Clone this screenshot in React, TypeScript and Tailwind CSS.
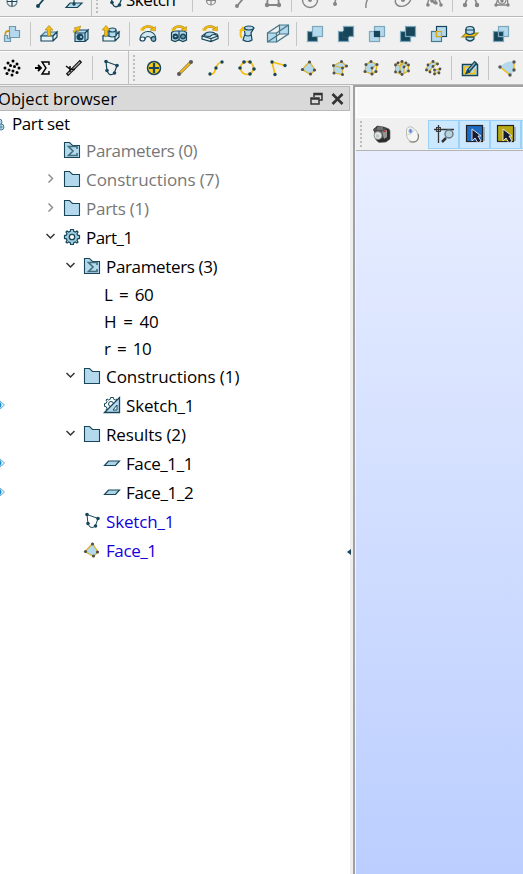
import type { ReactNode } from "react";

const D = "#17465a";
const B = "#b5d9ec";
const Y = "#f5bd10";
const M = "#dcb42a";
const G = "#858585";

function Dots({ pts, c = D, r = 1.7 }: { pts: number[][]; c?: string; r?: number }) {
  return (
    <>
      {pts.map(([x, y], i) => (
        <circle key={i} cx={x} cy={y} r={r} fill={c} stroke="none" />
      ))}
    </>
  );
}

function Tool({ children, label }: { children?: ReactNode; label: string }) {
  return (
    <button aria-label={label} className="h-8 w-[31px] shrink-0">
      <svg width="31" height="32" viewBox="-16 -16 31 32" fill="none" stroke={D} strokeWidth="1.2" className="block overflow-visible">
        {children}
      </svg>
    </button>
  );
}

function Sep() {
  return (
    <div className="flex h-6 w-1.5 shrink-0 justify-center">
      <div className="w-px bg-[#c6c6c6]" />
    </div>
  );
}

function Handle() {
  return (
    <div className="-mr-[2px] ml-[2px] flex h-[34px] w-3 shrink-0 items-center border-l border-[#c0c0c0] pl-[4px]">
      <Grip />
    </div>
  );
}

function Grip() {
  return (
    <div className="flex flex-col gap-[2px]">
      {[0, 1, 2, 3, 4, 5, 6].map((i) => (
        <div key={i} className="size-[2px] bg-[#bcbcbc]" />
      ))}
    </div>
  );
}

function SketchShape() {
  return (
    <>
      <path d="M-5-6.500L6-2.500L3.500 4.500Q1 8-2 6L-4 3Z" />
      <Dots pts={[[-5, -6.500], [6, -2.500], [3.500, 5], [-4, 2.500]]} r={1.800} />
    </>
  );
}

function Squares({ a, b, c, sa = "#7ba7bd", sb = "#7ba7bd", sc = D }: { a: string; b: string; c?: string; sa?: string; sb?: string; sc?: string }) {
  return (
    <>
      <rect x="-7.500" y="-2.500" width="10" height="10" fill={a} stroke={sa} />
      <rect x="-2.500" y="-7.500" width="10" height="10" fill={b} stroke={sb} />
      {c && <rect x="-2.500" y="-2.500" width="5" height="5" fill={c} stroke={sc} />}
    </>
  );
}

function FaceShape() {
  return (
    <>
      <path d="M.5-6.500L6 2L1.500 6.500L-7 1.500Z" fill={B} stroke={M} strokeWidth="1.300" />
      <Dots pts={[[0.5, -6], [5.5, 2], [1.500, 6], [-6.500, 1.500]]} c="#4f4f4f" r={1.600} />
    </>
  );
}

function TopRow() {
  return (
    <div className="-mt-[17px] flex h-[34px] items-center border-b border-[#b9b9b9] pt-px">
      <div className="-ml-1 flex items-center">
        <Tool label="Point"><circle cy="1.500" cx="0" r="5" stroke="#6b8592" /><path d="M-5 1.500H5M0-4V6.500" /></Tool>
        <Tool label="Line"><path d="M-5 6L5-6" strokeWidth="1.800" /><Dots pts={[[-5, 6], [5, -6]]} r={2} /></Tool>
        <Tool label="Plane"><path d="M-4 3H8L3.500 7.500H-8Z" fill={B} /><path d="M0-5V4" /><Dots pts={[[0, 4]]} /></Tool>
        <Handle />
        <button className="flex h-8 w-[88px] items-center">
          <svg width="26" height="32" viewBox="-15 -16 26 32" fill="none" stroke={D} strokeWidth="1.300"><SketchShape /></svg>
          <span className="-ml-px text-[17px] leading-8 tracking-[-0.500px] text-black">Sketch</span>
        </button>
        <Sep />
        <Tool label="Sketch point"><circle cy=".5" r="4.500" stroke={G} /><path d="M-4 .5H4M0-4V5" stroke={G} /></Tool>
        <Tool label="Sketch line"><path d="M-5 6L5-6" stroke={G} strokeWidth="1.800" /><Dots pts={[[-5, 6], [5, -6]]} c={G} r={2} /></Tool>
        <Tool label="Rectangle"><path d="M-6 5L-5-4H5L6 5Z" stroke={G} strokeWidth="1.800" /><Dots pts={[[-6, 5], [6, 5]]} c={G} r={2.200} /></Tool>
        <Sep />
        <Tool label="Circle"><circle r="7.500" stroke={G} strokeWidth="1.400" /><Dots pts={[[0, 0]]} c={G} r={2} /></Tool>
        <Tool label="Arc"><path d="M-6 4Q-6-3 0-6" stroke={G} strokeWidth="1.400" /><Dots pts={[[-6, 4]]} c={G} r={2} /></Tool>
        <Tool label="Fillet"><path d="M-6 8Q-7 0 0-6" stroke={G} strokeWidth="1.400" /></Tool>
        <Tool label="Ellipse"><ellipse rx="8" ry="6" transform="rotate(-25)" stroke={G} strokeWidth="1.400" /><Dots pts={[[0, 0]]} c={G} r={2} /></Tool>
        <Tool label="Spline"><path d="M-7 5L-4-4L0 3L4-4L7 5" stroke={G} strokeWidth="1.400" /><Dots pts={[[-6, 5], [-2, 1], [2, 3], [7, 5]]} c={G} r={1.800} /></Tool>
        <Sep />
        <Tool label="Curve poles"><path d="M-6 5Q-5-2 0-4Q5-2 6 5M-6 5L-2-6M6 5L2-6" stroke={G} strokeWidth="1.300" /><Dots pts={[[-6, 5], [6, 5]]} c={G} r={2.200} /></Tool>
        <Tool label="Periodic spline"><path d="M-6 5L-3-5L5-4L6 5Z" stroke={G} strokeWidth="1.300" /><circle r="4" stroke={G} /><Dots pts={[[-6, 5], [6, 5], [0, 1]]} c={G} /></Tool>
      </div>
    </div>
  );
}

function Box() {
  return (
    <>
      <path d="M-8 2L-4-2H8L4 2Z" fill={B} stroke="#46788b" />
      <path d="M-8 2H4V7H-8ZM4 2L8-2V3L4 7" fill="#e4f2f8" />
    </>
  );
}

function UpArrow({ x = 0 }: { x?: number }) {
  return <path d={`M${x} -8.5L${x + 4} -4H${x + 1.5}V2H${x - 1.5}V-4H${x - 4}Z`} fill={Y} stroke="#aa8926" strokeWidth=".7" />;
}

function TurnArrow() {
  return (
    <>
      <path d="M-5.500-4.500Q-4-7.500 0-7.500Q4-7.500 5.500-5" stroke="#a98318" strokeWidth="2.600" />
      <path d="M-5.500-4.500Q-4-7.500 0-7.500Q4-7.500 5.500-5" stroke={Y} strokeWidth="1.600" />
      <path d="M2-4L7.500-7.500V-3Z" fill={Y} stroke="#a98318" strokeWidth=".5" />
      <path d="M-7.500-6V-3L-3-3.500Z" fill={Y} stroke="none" />
    </>
  );
}

function FeatureRow() {
  return (
    <div className="flex h-[34px] items-center border-b border-[#b9b9b9] shadow-[inset_0_1px_#ffffff]">
      <div className="-ml-1 flex items-center">
        <Tool label="Placement">
          <path d="M-2.500-7.500H3.500V-3.500H7.500V3.500H-2.500Z" fill={B} stroke="#6c9aad" />
          <path d="M-7.500 1.500H-4.500V4.500H-1.500V7.500H-7.500Z" fill={B} stroke="#6c9aad" />
          <path d="M-6.500 1Q-7.500-3-3-3" stroke="#c69b24" strokeWidth="1.800" />
        </Tool>
        <Sep />
        <Tool label="Extrusion"><Box /><UpArrow /></Tool>
        <Tool label="Extrusion cut">
          <path d="M-5-2L-2-4H8L5-1H-5ZM-5-1H5V7.500H-5ZM5-1L8-4V5L5 7.500" fill={B} />
          <circle cy="3" r="3" fill={D} /><circle cx="1" cy="3" r="1" fill={B} stroke="none" />
          <path d="M-7-3L-4-5L-6-6L1-8L-2-2L-3-4L-6-1Z" fill={Y} stroke="#aa8926" strokeWidth=".6" />
        </Tool>
        <Tool label="Extrusion fuse"><Box /><path d="M-2-4V2Q1 4 5 2V-4" fill={B} /><ellipse cx="1.500" cy="-4" rx="3.500" ry="2" fill={B} /><UpArrow x={-5} /></Tool>
        <Sep />
        <Tool label="Revolution">
          <path d="M-5.500 4.500Q-4 0 0 0Q4 0 5.500 4" stroke={D} strokeWidth="6" /><path d="M-5.500 4.500Q-4 0 0 0Q4 0 5.500 4" stroke="#d3e8f1" strokeWidth="4.200" />
          <ellipse cx="-5.500" cy="5" rx="2.500" ry="2" fill="#fff" /><circle cx="5.500" cy="5" r="2.300" fill="#8bb6c9" /><TurnArrow />
        </Tool>
        <Tool label="Revolution cut">
          <path d="M-7.500-1.500L-5-3H5L7.500-1.500V6L4 7.500L0 6L-4 7.500L-7.500 6Z" fill={B} /><circle cx="-3.500" cy="2.500" r="2.400" fill={D} /><circle cx="4" cy="2.500" r="2.400" fill="#6893a4" /><path d="M0-3V6" /><path d="M-4.500 2.500H-2.500" stroke={B} /><TurnArrow />
        </Tool>
        <Tool label="Revolution fuse">
          <path d="M-8 2L-4-1L7 0L8 2V4.500L1 7.500L-8 5ZM-8 2L1 4.500L8 2M1 4.500V7" fill="#e5f2f6" /><path d="M-5.500 2Q-5-2 0-2Q5-2 6 1Q3-.5 0 2.500Z" fill={B} /><TurnArrow />
        </Tool>
        <Sep />
        <Tool label="Pipe">
          <path d="M-3-6Q2-9 7-6L4-1L5 6Q1 9-4 6L-2 0Z" fill={B} /><ellipse cx="2" cy="-6" rx="4.500" ry="2" fill={B} /><path d="M-2 1Q1 3 4 1" />
          <path d="M-5 4Q-8 1-5-5" stroke={Y} strokeWidth="2" /><path d="M-8-3L-4-8L-2-3Z" fill={Y} stroke="none" />
        </Tool>
        <Tool label="Loft">
          <path d="M-10.500-1H-1.500V8H-10.500ZM1.500-9H10.500V0H1.500Z" fill={B} stroke="#477787" /><path d="M-10.500-1L1.500-9M-1.500-1L10.500-9M-1.500 8L10.500 0M-10.500 8L1.500 0" stroke="#477787" strokeWidth="1.400" />
        </Tool>
        <Sep />
        <Tool label="Cut"><Squares a={D} b={B} /></Tool>
        <Tool label="Fuse"><Squares a={D} b={D} /><path d="M-2-2H2V2H-2Z" fill={D} strokeWidth="2" /></Tool>
        <Tool label="Common"><Squares a={B} b={B} c={D} /></Tool>
        <Tool label="Smash"><Squares a={D} b={D} /></Tool>
        <Tool label="Split"><Squares a={B} b={B} c={B} sa="#467b91" sb={D} sc="#dbab16" /></Tool>
        <Tool label="Partition"><path d="M-4-5V5Q0 9 4 5V-5" fill={B} /><ellipse cy="-5" rx="4" ry="2.500" fill={B} /><path d="M-4-1H8L4 3H-8Z" fill={Y} stroke="#a58b20" /><path d="M-4-1Q0 2 4-1V-4H-4Z" fill={B} /><path d="M-4 3H4" /></Tool>
        <Tool label="Fill"><Squares a={D} b={B} c={D} sc="#7ba7bd" /></Tool>
      </div>
    </div>
  );
}

function BuildRow() {
  return (
    <div className="flex h-[34px] items-center border-b border-[#b9b9b9] shadow-[inset_0_1px_#ffffff]">
      <div className="-ml-1 flex items-center">
        <Tool label="Linear copy"><Dots r={1.500} c="#000" pts={[[-4, -5], [1, -7], [5, -4], [-1.500, -2.500], [2.500, -1.500], [-7, 0], [-3, 2], [7, 0], [1, 3], [-5, 5.500], [0, 7], [5, 4.500]]} /></Tool>
        <Tool label="Parameter sum"><path d="M-8 0H-2M-5-3L-2 0L-5 3" stroke="#000" strokeWidth="1.800" /><path d="M6-3V-6H-1L3 0L-1 6H6V3" stroke="#000" strokeWidth="1.400" /></Tool>
        <Tool label="Measurement"><path d="M-7 7L7-7" stroke="#111" strokeWidth="3.200" /><path d="M-6 6L6-6" stroke="#aaa" strokeWidth="1.200" /><path d="M-8-2L-4 1L1 1.500M-4-2V4" stroke="#111" strokeWidth="1.500" /></Tool>
        <Sep />
        <Tool label="Sketch"><SketchShape /></Tool>
        <Handle />
        <Tool label="Vertex"><circle r="6.500" fill="#f8cb16" strokeWidth="1.500" /><path d="M-5 0H5M0-5V5" strokeWidth="2.200" /></Tool>
        <Tool label="Edge"><path d="M-6 6L6-6" stroke="#665b3b" strokeWidth="3" /><path d="M-6 6L6-6" stroke={Y} strokeWidth="1.800" /><Dots c="#595959" r={2} pts={[[-6, 6], [6, -6]]} /></Tool>
        <Tool label="Curve"><path d="M-6 6C2 7-3-5 6-6" stroke={Y} strokeWidth="1.700" /><Dots pts={[[-6, 6], [0, 0], [6, -6]]} /></Tool>
        <Tool label="Wire"><circle r="6.500" stroke={Y} strokeWidth="1.700" /><Dots r={1.800} pts={[[-3, -6], [3, -6], [7, 1], [3, 6], [-7, 0]]} /></Tool>
        <Tool label="Polyline"><path d="M7-2.500L-6-6L-3 6.500" stroke={Y} strokeWidth="1.700" /><Dots pts={[[7, -2.500], [-6, -6], [-3, 6.500]]} /></Tool>
        <Tool label="Face"><FaceShape /></Tool>
        <Tool label="Shell"><path d="M-6.500-2.500L1.500-6.500L6.500-2L2.500 0V6.500L-6 5ZM-6.500-2.500L2.500 0" fill={B} stroke={M} strokeWidth="1.200" /><Dots c="#4f4f4f" r={1.500} pts={[[-6.500, -2.500], [1.500, -6.500], [6.500, -2], [2.500, 6.500], [-6, 5], [2.500, 0]]} /></Tool>
        <Tool label="Solid"><path d="M0-6.500L6-3.500L5 3.500L1 6L-6 3.500L-5-3.500ZM6-3.500L1 0V6" fill={B} stroke={M} strokeWidth="1.300" /><Dots c="#4f4f4f" r={1.500} pts={[[0, -6.500], [6, -3.500], [5, 3.500], [1, 6], [-6, 3.500], [-5, -3.500], [1, 0]]} /></Tool>
        <Tool label="Compsolid"><path d="M0-6.500L6.500-3V3L0 6.500L-6.500 4V-4ZM-6.500-4L-2-2L0-6.500M-2-2V5M6.500-3L2-1V5M-2-2L2-5" fill={B} stroke={M} strokeWidth="1.200" /><Dots c="#4f4f4f" r={1.400} pts={[[0, -6.500], [-4, -5], [4, -5], [6.500, -3], [6.500, 3], [0, 6.500], [-6.500, 4], [-6.500, -3], [2, -1], [-2, 4]]} /></Tool>
        <Tool label="Compound"><path d="M-5-3L0-6.500L5-4L0-2L-3 3L-7 2ZM1 2L6 1L6 4L2 6Z" fill={B} stroke={M} strokeWidth="1.200" /><Dots c="#4f4f4f" r={1.400} pts={[[-5, -3], [0, -6.500], [4.500, -4], [-6.500, 2], [-3, 4], [1.500, 2], [7, 1], [1.500, 6], [6, 5], [0, -1.500]]} /></Tool>
        <Sep />
        <Tool label="Edit sketch"><path d="M-7.500-3.500H7.500V7.500H-7.500Z" fill={B} strokeWidth="1.500" /><path d="M2-1H-5.500V5.500H5V1" stroke={Y} strokeWidth="1.600" /><path d="M-2 3.500L6-6" stroke={D} strokeWidth="4" /><path d="M-4 5.500L-2.500 2L-.5 4Z" fill={D} /><path d="M-1 2L5-5" stroke="#8ba9b5" /></Tool>
        <Sep />
        <Tool label="Surface"><path d="M-7-1Q-1-8 7-6V2Q7 4 3 7Z" fill={B} stroke="none" /><path d="M-7-1L3 7M7-6V2" stroke={Y} strokeWidth="1.500" /><Dots c="#555" pts={[[-7, -1], [3, 7], [7, -6], [7, 2]]} /></Tool>
      </div>
    </div>
  );
}

type IconKind = "folder" | "params" | "gear" | "construction" | "face" | "sketch" | "build";

const gearPath =
  "M-1.400-7.500H1.400L1.800-5.700L3.300-5L5-6L6-5L5-3.300L5.700-1.800L7.500-1.400V1.400L5.700 1.800L5 3.300L6 5L5 6L3.300 5L1.800 5.700L1.400 7.500H-1.400L-1.800 5.700L-3.300 5L-5 6L-6 5L-5 3.300L-5.700 1.800L-7.500 1.400V-1.400L-5.700-1.800L-5-3.300L-6-5L-5-6L-3.300-5L-1.800-5.700Z";

function TreeIcon({ kind }: { kind: IconKind }) {
  return (
    <svg width="16" height="16" viewBox="-8 -8 16 16" fill="none" stroke={D} strokeWidth="1" className="relative -top-px shrink-0 overflow-visible">
      {(kind === "folder" || kind === "params") && <path d="M-7.500 7.500V-7.500H-2.500L.5-4.500H7.500V7.500Z" fill={B} strokeWidth="1.100" />}
      {kind === "params" && <path d="M5-1V-3.500H-3.500L1 1L-3.500 5.500H5V3" stroke="#426f7e" strokeWidth="1.600" />}
      {kind === "gear" && <><path d={gearPath} fill="#9fcbdc" strokeWidth="1.200" /><circle r="2.700" fill="#fff" strokeWidth="1.300" /></>}
      {kind === "construction" && (
        <>
          <path d={gearPath} fill="#fff" /><circle cx="-1" cy="-1" r="2.500" />
          <path d="M-7.500 7.500L7.500-7.500V7.500Z" fill={B} strokeWidth="1.300" /><path d="M1 5L5 0V5Z" fill="#fff" />
        </>
      )}
      {kind === "face" && <path d="M-3.500-2H7.500L3.500 2.500H-7.500Z" fill="#acd4e5" strokeWidth="1.200" />}
      {kind === "sketch" && <SketchShape />}
      {kind === "build" && <FaceShape />}
    </svg>
  );
}

interface Row {
  text: string;
  icon?: IconKind;
  level: 1 | 2 | 3;
  arrow?: "open" | "closed";
  tone?: "muted" | "blue";
  eye?: boolean;
  spacing: string;
}

const rows: Row[] = [
  { text: "Parameters (0)", icon: "params", level: 1, tone: "muted", spacing: "tracking-[-0.350px]" },
  { text: "Constructions (7)", icon: "folder", level: 1, arrow: "closed", tone: "muted", spacing: "tracking-[-0.050px]" },
  { text: "Parts (1)", icon: "folder", level: 1, arrow: "closed", tone: "muted", spacing: "tracking-[-0.250px]" },
  { text: "Part_1", icon: "gear", level: 1, arrow: "open", spacing: "tracking-[-0.550px]" },
  { text: "Parameters (3)", icon: "params", level: 2, arrow: "open", spacing: "tracking-[-0.350px]" },
  { text: "L = 60", level: 3, spacing: "tracking-[-0.300px] [word-spacing:2.200px]" },
  { text: "H = 40", level: 3, spacing: "tracking-[-0.200px] [word-spacing:2.600px]" },
  { text: "r = 10", level: 3, spacing: "tracking-[-0.300px] [word-spacing:2.200px]" },
  { text: "Constructions (1)", icon: "folder", level: 2, arrow: "open", spacing: "tracking-[-0.050px]" },
  { text: "Sketch_1", icon: "construction", level: 3, eye: true, spacing: "tracking-[-0.150px]" },
  { text: "Results (2)", icon: "folder", level: 2, arrow: "open", spacing: "tracking-[-0.120px]" },
  { text: "Face_1_1", icon: "face", level: 3, eye: true, spacing: "tracking-[-0.400px]" },
  { text: "Face_1_2", icon: "face", level: 3, eye: true, spacing: "tracking-[-0.350px]" },
  { text: "Sketch_1", icon: "sketch", level: 2, tone: "blue", spacing: "tracking-[-0.150px]" },
  { text: "Face_1", icon: "build", level: 2, tone: "blue", spacing: "tracking-[-0.400px]" },
];

const slot = { 1: "w-[59px]", 2: "w-[79px]", 3: "w-[99px]" };

function TreeRow({ row }: { row: Row }) {
  const color = row.tone === "muted" ? "text-[#777777]" : row.tone === "blue" ? "text-[#1500dc]" : "text-black";
  return (
    <div className={`flex items-center ${row.icon ? "h-[29px]" : "h-[27px]"} ${color}`}>
      <div className="flex w-[5px] shrink-0">
        {row.eye && (
          <svg width="5" height="10" viewBox="0 0 5 10" className="relative -top-px">
            <path d="M0 1L4.500 5L0 9" fill="#e5f5fd" stroke="#71a8c4" /><path d="M0 2Q3 5 0 8Z" fill="#188ed2" />
          </svg>
        )}
      </div>
      <div className={`flex shrink-0 justify-end pr-[9px] ${slot[row.level]}`}>
        {row.arrow && (
          <svg width="9" height="9" viewBox="0 0 9 9" fill="none" className="relative -top-px" strokeWidth="1.500" stroke={row.arrow === "open" ? "#333" : "#909090"}>
            <path d={row.arrow === "open" ? "M.5 2L4.500 6L8.500 2" : "M2.500 .5L6.500 4.500L2.500 8.500"} />
          </svg>
        )}
      </div>
      {row.icon && <TreeIcon kind={row.icon} />}
      <span className={`whitespace-nowrap text-[17px] leading-[27px] ${row.spacing} ${row.icon ? "pl-[6px]" : ""}`}>{row.text}</span>
    </div>
  );
}

function ObjectBrowser() {
  return (
    <div className="flex w-[350px] shrink-0 flex-col bg-white">
      <div className="flex h-[25px] items-center justify-between border border-l-0 border-[#b8b8b8] bg-[#d9d9d9] pr-[5px]">
        <span className="-ml-[2px] text-[16.500px] leading-6 tracking-[0.080px] text-black">Object browser</span>
        <div className="flex gap-2">
          <svg width="13" height="14" viewBox="0 0 13 14" fill="none" stroke="#333" strokeWidth="1.500">
            <path d="M4 5V1.500H12V8H9M4 2.500H12M1 6H9V12H1ZM1 7H9" />
          </svg>
          <svg width="13" height="14" viewBox="0 0 13 14" stroke="#333" strokeWidth="2.600"><path d="M1.500 2L11.500 12M11.500 2L1.500 12" /></svg>
        </div>
      </div>
      <div className="flex h-[25px] items-start">
        <svg width="6" height="14" viewBox="0 0 6 14" fill={B} stroke="#477e93" className="mt-[7px]"><circle cx="-1" cy="4" r="3" /><circle cx="1" cy="9" r="3" /><circle cx="1" cy="9" r="1" fill="#fff" /></svg>
        <span className="pl-[6px] text-[17px] leading-[26px] tracking-[-0.400px]">Part set</span>
      </div>
      {rows.map((row, i) => <TreeRow key={i} row={row} />)}
    </div>
  );
}

function ViewButton({ children, on, label }: { children?: ReactNode; on?: boolean; label: string }) {
  return (
    <button aria-label={label} className={`flex h-[29px] w-[31px] shrink-0 items-center justify-center border ${on ? "border-[#99d1fb] bg-[#cce8ff]" : "border-transparent"}`}>
      <svg width="22" height="22" viewBox="-11 -11 22 22" fill="none" stroke="#333" className="shrink-0 overflow-visible">{children}</svg>
    </button>
  );
}

function Pointer({ fill }: { fill: string }) {
  return (
    <>
      <path d="M-6-7H10V7H-6Z" fill="#9db0bd" stroke="none" />
      <rect x="-8.500" y="-8.500" width="16" height="16" fill={fill} stroke="#222" strokeWidth="1.200" />
      <path d="M-3-5V7L0 4L3 9L6 7L3 2H6Z" fill="#17192f" stroke="#e9eef3" strokeWidth=".9" />
    </>
  );
}

function Viewer() {
  return (
    <div className="flex min-w-0 flex-1 flex-col border-l-2 border-t-2 border-[#a0a0a0]">
      <div className="flex flex-1 flex-col border-l border-[#f4f4f4]">
        <div className="h-[31px] border-b border-l border-t border-white bg-[#f8f8f8]" />
        <div className="flex h-[33px] items-center overflow-hidden border-b border-[#b3b3b3] bg-[#f0f0f0] pl-1">
          <div className="mr-[4px]"><Grip /></div>
          <ViewButton label="Snapshot">
            <g transform="translate(-1 0)">
              <path d="M-7-5L-4-8L3-7L8-5L9-3V5L5 8L-2 8.500L-5 6Z" fill="#2b2b2b" stroke="#555" strokeWidth=".6" />
              <path d="M-8-4Q-7-7-4-6L5-6L6 4L-3 4Z" fill="#4c4c4c" stroke="none" />
              <path d="M-4-7L2-7V-4H-4Z" fill="#707070" stroke="none" />
              <path d="M1-3L6-4V3L3 5Z" fill="#959595" stroke="none" /><path d="M2-2.500L5-3" stroke="#d62929" strokeWidth="1.400" />
              <circle cx="-3" cy="1.500" r="4" fill="#e3e3e3" stroke="#777" strokeWidth=".8" /><circle cx="-3.500" cy="2" r="1.800" fill="#b5cbc8" stroke="none" />
            </g>
          </ViewButton>
          <ViewButton label="Mouse style">
            <g transform="translate(-1.500 0)">
              <path d="M-5-4Q-4-8 0-7Q6-4 7 2Q7 8 1 8Q-4 7-5 2Z" fill="#f6f6f4" stroke="#b4b4ae" strokeWidth=".9" /><path d="M-5 1Q0 1 3-4" stroke="#d0d0ca" /><ellipse cx="-1" cy="-3" rx="1.600" ry="2" fill="#5d83dc" stroke="#a5b5d7" /><path d="M-2 7.500Q2 9 5 7Q8 4 6.500 0" stroke="#85857f" strokeWidth="1.200" />
            </g>
          </ViewButton>
          <ViewButton label="Zooming style" on>
            <path d="M-10-4.500H10M-5.500-9V9" strokeWidth="1.300" /><rect x="-7.500" y="-6.500" width="4" height="4" strokeWidth=".9" /><circle cx="5" cy="0" r="4" fill="#b5d2de" stroke="#667680" strokeWidth="1.400" /><path d="M2 4L-2 8" strokeWidth="2.500" />
          </ViewButton>
          <ViewButton label="Preselection" on><Pointer fill="#1d6bc3" /></ViewButton>
          <ViewButton label="Selection" on><Pointer fill="#b9a812" /></ViewButton>
          <ViewButton label="Rectangle selection" on />
        </div>
        <div className="flex-1 bg-linear-to-b from-[#e8eeff] to-[#bbceff]" />
      </div>
    </div>
  );
}

export default function App() {
  return (
    <div className="flex h-[874px] w-[523px] flex-col overflow-hidden bg-[#f0f0f0] font-['Open_Sans','Noto_Sans',sans-serif]">
      <TopRow />
      <FeatureRow />
      <BuildRow />
      <div className="flex min-h-0 flex-1">
        <div className="mt-px flex"><ObjectBrowser /></div>
        <div className="flex w-[3px] items-center justify-end bg-[#eeeeee]">
          <svg width="4" height="6" viewBox="0 0 4 6" className="relative -left-[2px] top-[72px] shrink-0"><path d="M4 0L0 3L4 6Z" fill={D} /></svg>
        </div>
        <Viewer />
      </div>
    </div>
  );
}
